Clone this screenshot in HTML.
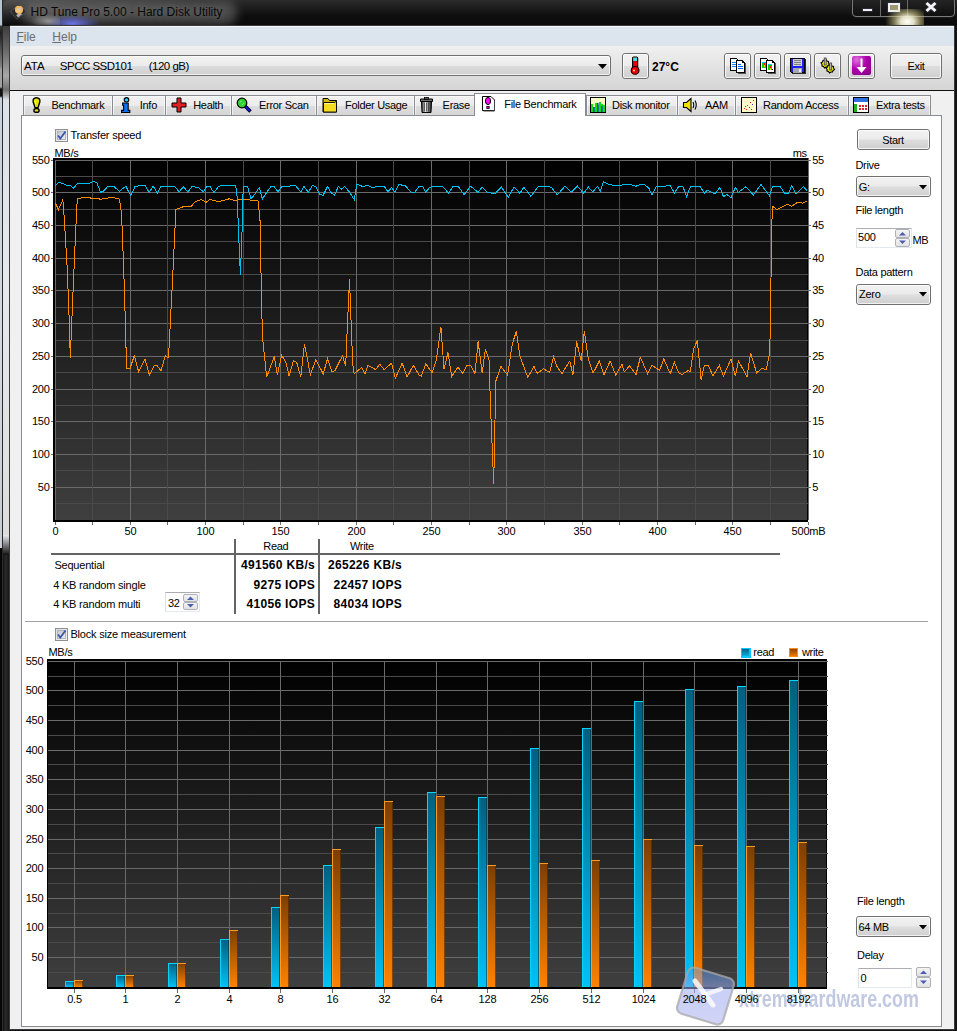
<!DOCTYPE html><html><head><meta charset="utf-8"><style>
html,body{margin:0;padding:0;width:957px;height:1031px;overflow:hidden;background:#121212}
.b{position:absolute;box-sizing:border-box}
.t{position:absolute;white-space:pre;font-family:"Liberation Sans",sans-serif}
svg.b{position:absolute}
</style></head><body>
<div class="b" style="left:0px;top:0px;width:957px;height:1031px;background:#121212"></div>
<div class="b" style="left:0px;top:0px;width:3px;height:548px;background:linear-gradient(#b8c4d0 0,#b8c4d0 25px,#3a3a3a 26px,#202020 33px,#808080 66px,#a0a0a0 70px,#a0a0a0 87px,#101010 89px,#101010 96px,#c8d0dc 98px,#d4d9e0 60%,#c8ccd4)"></div>
<div class="b" style="left:0px;top:548px;width:3px;height:483px;background:#060606"></div>
<div class="b" style="left:2px;top:0px;width:1px;height:1031px;background:#2a2a2a"></div>
<div class="b" style="left:3px;top:26px;width:6px;height:522px;background:linear-gradient(#3c3c3c 0,#6a6a6a 25px,#a8a8a8 50px,#707070 64px,#dde2e8 74px,#e6e8ec 50%,#dcdcdc 100%)"></div>
<div class="b" style="left:3px;top:548px;width:6px;height:483px;background:linear-gradient(90deg,#141414,#2a2a2a 50%,#141414)"></div>
<div class="b" style="left:3px;top:535px;width:6px;height:20px;background:linear-gradient(#e8eaee,#101010)"></div>
<div class="b" style="left:3px;top:0px;width:954px;height:26px;background:linear-gradient(180deg,#2c2c2c,#0e0e0e 60%,#0a0a0a);border-top-left-radius:6px"></div>
<div class="b" style="left:3px;top:0px;width:200px;height:26px;background:radial-gradient(ellipse at 0% 0%,rgba(110,110,110,.55),rgba(0,0,0,0) 70%)"></div>
<div class="b" style="left:22px;top:1px;width:215px;height:24px;background:rgba(120,120,120,.55);border-radius:12px;filter:blur(5px)"></div>
<div class="b" style="left:45px;top:15px;width:55px;height:14px;background:radial-gradient(ellipse at 50% 60%,rgba(110,120,240,.95),rgba(90,100,220,.4) 45%,rgba(0,0,0,0) 72%)"></div>
<div class="b" style="left:30px;top:14px;width:30px;height:12px;background:radial-gradient(ellipse at 60% 60%,rgba(200,200,200,.6),rgba(0,0,0,0) 70%)"></div>
<svg class="b" style="left:8px;top:2px" width="20" height="20" viewBox="0 0 20 20"><g transform="rotate(-40 10.3 9.7)"><rect x="4.3" y="4.7" width="12" height="10" rx="1" fill="#2a2a2a" stroke="#777" stroke-width=".7" stroke-dasharray="1.2 .8"/><rect x="6.5" y="11" width="5" height="3" fill="#b8b0b0"/></g><circle cx="11" cy="7.8" r="4.1" fill="#f0b860"/><circle cx="10.4" cy="8.4" r="2.2" fill="#f8d090" opacity=".7"/><circle cx="11.3" cy="7.4" r="1.3" fill="#c8c8d8"/></svg>
<div class="t" style="left:30.50px;top:3.83px;font-size:12px;line-height:16px;color:#080808;font-weight:normal;letter-spacing:0px;text-shadow:0 0 6px rgba(200,200,200,.35)">HD Tune Pro 5.00 - Hard Disk Utility</div>
<div class="b" style="left:851px;top:-4px;width:105px;height:22px;border:1px solid #1a1a1a;border-radius:5px;background:rgba(20,20,20,.35)"></div>
<div class="b" style="left:852px;top:-3px;width:103px;height:20px;border:1px solid #7a7a7a;border-radius:4px"></div>
<div class="b" style="left:880px;top:0px;width:1px;height:16px;background:#6a6a6a"></div>
<div class="b" style="left:907px;top:0px;width:1px;height:16px;background:#6a6a6a"></div>
<div class="b" style="left:862px;top:8px;width:11px;height:4px;background:#eef0f6;border:1px solid #2a2a3a"></div>
<div class="b" style="left:888px;top:3px;width:12px;height:9px;border:2px solid #eef0f6;outline:1px solid #2a2a3a;background:#a09870"></div>
<svg class="b" style="left:924px;top:1px" width="14" height="12" viewBox="0 0 14 12"><path d="M2.5 2 L11.5 10 M11.5 2 L2.5 10" stroke="#2a2a3a" stroke-width="4.6"/><path d="M2.5 2 L11.5 10 M11.5 2 L2.5 10" stroke="#f4f4f8" stroke-width="3"/></svg>
<div class="b" style="left:880px;top:9px;width:44px;height:18px;background:radial-gradient(ellipse 50% 90% at 62% 70%,rgba(255,255,252,1),rgba(250,248,220,.9) 30%,rgba(220,210,140,.55) 60%,rgba(0,0,0,0) 100%)"></div>
<div class="b" style="left:9px;top:25px;width:946px;height:1005px;background:#f0f0f0;border:1px solid #3a3a3a;box-sizing:border-box;border-radius:2px 2px 0 0"></div>
<div class="b" style="left:10px;top:26px;width:944px;height:1px;background:#f6f8fb"></div>
<div class="b" style="left:10px;top:27px;width:944px;height:19px;background:#dce4ee"></div>
<div class="t" style="left:16.40px;top:29.03px;font-size:12px;line-height:16px;color:#6d6d6d;font-weight:normal;letter-spacing:0px;"><u>F</u>ile</div>
<div class="t" style="left:52.30px;top:29.03px;font-size:12px;line-height:16px;color:#6d6d6d;font-weight:normal;letter-spacing:0px;"><u>H</u>elp</div>
<div class="b" style="left:10px;top:46px;width:944px;height:45px;background:linear-gradient(#f0f0f0,#d4d4d4)"></div>
<div class="b" style="left:10px;top:90px;width:944px;height:1px;background:#101010"></div>
<div class="b" style="left:10px;top:91px;width:944px;height:938px;background:#f0f0f0"></div>
<div class="b" style="left:21px;top:55px;width:590px;height:21px;border:1px solid #707070;border-radius:3px;background:linear-gradient(#f2f2f2,#ebebeb 50%,#dddddd 51%,#cfcfcf)"></div><div class="b" style="left:22px;top:56px;width:588px;height:19px;border:1px solid rgba(255,255,255,.7);border-radius:2px"></div>
<svg class="b" style="left:598px;top:64px" width="9" height="5" viewBox="0 0 9 5"><path d="M0 0 H9 L4.5 5 Z" fill="#000"/></svg>
<div class="t" style="left:23.90px;top:58.85px;font-size:11.5px;line-height:15.5px;color:#000;font-weight:normal;letter-spacing:0px;">ATA</div>
<div class="t" style="left:59.80px;top:58.85px;font-size:11.5px;line-height:15.5px;color:#000;font-weight:normal;letter-spacing:-0.5px;">SPCC SSD101</div>
<div class="t" style="left:148.70px;top:58.85px;font-size:11.5px;line-height:15.5px;color:#000;font-weight:normal;letter-spacing:-0.5px;">(120 gB)</div>
<div class="b" style="left:622px;top:53px;width:27px;height:26px;border:1px solid #707070;border-radius:3px;background:linear-gradient(#f2f2f2,#ebebeb 48%,#dddddd 52%,#cfcfcf)"></div><div class="b" style="left:623px;top:54px;width:25px;height:24px;border:1px solid rgba(255,255,255,.75);border-radius:2px"></div>
<svg class="b" style="left:628px;top:56px" width="16" height="20" viewBox="0 0 16 20"><rect x="4.6" y="1" width="5" height="12" rx="1" fill="#e80000" stroke="#000" stroke-width="1.1"/><rect x="5.2" y="1.6" width="3.8" height="3.4" fill="#40e0f0"/><circle cx="7.1" cy="14.4" r="3.9" fill="#e80000" stroke="#000" stroke-width="1.1"/><circle cx="6" cy="14.6" r="1" fill="#ffd0d0"/><path d="M9.6 2 V11" stroke="#000" stroke-width="1"/></svg>
<div class="t" style="left:652.00px;top:58.83px;font-size:12px;line-height:16px;color:#000;font-weight:bold;letter-spacing:0px;">27°C</div>
<div class="b" style="left:724px;top:53px;width:27px;height:26px;border:1px solid #707070;border-radius:3px;background:linear-gradient(#f2f2f2,#ebebeb 48%,#dddddd 52%,#cfcfcf)"></div><div class="b" style="left:725px;top:54px;width:25px;height:24px;border:1px solid rgba(255,255,255,.75);border-radius:2px"></div>
<div class="b" style="left:754px;top:53px;width:27px;height:26px;border:1px solid #707070;border-radius:3px;background:linear-gradient(#f2f2f2,#ebebeb 48%,#dddddd 52%,#cfcfcf)"></div><div class="b" style="left:755px;top:54px;width:25px;height:24px;border:1px solid rgba(255,255,255,.75);border-radius:2px"></div>
<div class="b" style="left:784px;top:53px;width:27px;height:26px;border:1px solid #707070;border-radius:3px;background:linear-gradient(#f2f2f2,#ebebeb 48%,#dddddd 52%,#cfcfcf)"></div><div class="b" style="left:785px;top:54px;width:25px;height:24px;border:1px solid rgba(255,255,255,.75);border-radius:2px"></div>
<div class="b" style="left:814px;top:53px;width:27px;height:26px;border:1px solid #707070;border-radius:3px;background:linear-gradient(#f2f2f2,#ebebeb 48%,#dddddd 52%,#cfcfcf)"></div><div class="b" style="left:815px;top:54px;width:25px;height:24px;border:1px solid rgba(255,255,255,.75);border-radius:2px"></div>
<div class="b" style="left:848px;top:53px;width:27px;height:26px;border:1px solid #707070;border-radius:3px;background:linear-gradient(#f2f2f2,#ebebeb 48%,#dddddd 52%,#cfcfcf)"></div><div class="b" style="left:849px;top:54px;width:25px;height:24px;border:1px solid rgba(255,255,255,.75);border-radius:2px"></div>
<svg class="b" style="left:730px;top:58px" width="17" height="17" viewBox="0 0 17 17" shape-rendering="crispEdges"><path d="M0.5 0.5 H6.5 L7.5 1.5 V12.5 H0.5 Z" fill="#fff" stroke="#000"/><path d="M6.5 2.5 H12.5 L14.5 4.5 V14.5 H6.5 Z" fill="#fff" stroke="#000"/><path d="M15.5 5 V15.5 H7.5" stroke="#555" fill="none"/><path d="M12.5 2.5 V4.5 H14.5" stroke="#000" fill="none"/><rect x="2" y="4" width="4" height="1" fill="#1090ff"/><rect x="2" y="6" width="4" height="1" fill="#1090ff"/><rect x="2" y="8" width="4" height="1" fill="#1090ff"/><rect x="8" y="6" width="3" height="1" fill="#0060ff"/><rect x="8" y="8" width="5" height="1" fill="#0060ff"/><rect x="8" y="10" width="5" height="1" fill="#0060ff"/></svg>
<svg class="b" style="left:760px;top:58px" width="17" height="17" viewBox="0 0 17 17" shape-rendering="crispEdges"><path d="M0.5 0.5 H6.5 L7.5 1.5 V12.5 H0.5 Z" fill="#fff" stroke="#000"/><path d="M6.5 2.5 H12.5 L14.5 4.5 V14.5 H6.5 Z" fill="#fff" stroke="#000"/><path d="M15.5 5 V15.5 H7.5" stroke="#555" fill="none"/><path d="M12.5 2.5 V4.5 H14.5" stroke="#000" fill="none"/><rect x="2" y="4" width="4" height="1" fill="#10c0ff"/><rect x="2" y="5" width="4" height="5" fill="#10d010"/><rect x="4" y="5" width="1" height="2" fill="#f00000"/><rect x="4" y="7" width="1" height="2" fill="#e8e000"/><rect x="8" y="6" width="4" height="1" fill="#10c0ff"/><rect x="8" y="7" width="4" height="5" fill="#10d010"/><rect x="10" y="8" width="1" height="2" fill="#f00000"/><rect x="10" y="10" width="1" height="2" fill="#e8e000"/><rect x="12" y="11" width="1" height="1" fill="#000"/></svg>
<svg class="b" style="left:790px;top:58px" width="16" height="16" viewBox="0 0 16 16" shape-rendering="crispEdges"><path d="M0.5 0.5 H14.5 V14.5 H1.5 L0.5 13.5 Z" fill="#2020f0" stroke="#000"/><rect x="3" y="1" width="9" height="7" fill="#d0d0d0"/><rect x="4" y="2" width="7" height="1" fill="#808080"/><rect x="4" y="4" width="7" height="1" fill="#808080"/><rect x="4" y="6" width="7" height="1" fill="#808080"/><rect x="3" y="10" width="9" height="5" fill="#a8a8a8"/><rect x="9" y="11" width="2" height="3" fill="#f0f0f0"/><path d="M15.5 1 V15.5 H2" stroke="#303030" fill="none"/></svg>
<svg class="b" style="left:818px;top:57px" width="18" height="18" viewBox="0 0 18 18"><g stroke="#000" stroke-width="1.1" fill="#f0ec00"><path d="M6.5 3 L8 2.5 L9 4 L10.5 4.5 L10.5 6 L11.5 7.5 L10 8.5 L9.5 10 L8 10 L6.5 11 L5.5 9.5 L4 9 L4 7.5 L3 6 L4.5 5 L5 3.5 Z"/><path d="M11.5 8 L13 7.5 L14 9 L15.5 9.5 L15.5 11 L16.5 12.5 L15 13.5 L14.5 15 L13 15 L11.5 16 L10.5 14.5 L9 14 L9 12.5 L8 11 L9.5 10 L10 8.5 Z"/></g><rect x="6.2" y="1" width="2" height="7" fill="#b8b8b8" stroke="#303030" stroke-width=".7"/><rect x="11.7" y="6" width="2" height="7" fill="#b8b8b8" stroke="#303030" stroke-width=".7"/></svg>
<div class="b" style="left:852px;top:56px;width:19px;height:19px;border-radius:2px;background:radial-gradient(circle at 25% 20%,#e070e0,#b000b0 45%,#8a008a 90%)"></div>
<svg class="b" style="left:852px;top:56px" width="19" height="19" viewBox="0 0 19 19"><path d="M8.5 2.5 H10.5 V11 H14.5 L9.5 17 L4.5 11 H8.5 Z" fill="#fff"/></svg>
<div class="b" style="left:890px;top:53px;width:52px;height:26px;border:1px solid #707070;border-radius:3px;background:linear-gradient(#f2f2f2,#ebebeb 48%,#dddddd 52%,#cfcfcf)"></div><div class="b" style="left:891px;top:54px;width:50px;height:24px;border:1px solid rgba(255,255,255,.75);border-radius:2px"></div>
<div class="t" style="left:816px;width:200px;top:59.36px;font-size:11px;line-height:15px;color:#000;font-weight:normal;letter-spacing:-0.3px;text-align:center;">Exit</div>
<div class="b" style="left:23px;top:95px;width:90px;height:21px;border:1px solid #898c95;border-bottom:none;background:linear-gradient(#f2f2f2,#ebebeb 50%,#dddddd 51%,#d5d5d5)"></div>
<div class="b" style="left:24px;top:96px;width:88px;height:19px;border:1px solid rgba(255,255,255,.6);border-bottom:none"></div>
<svg class="b" style="left:29px;top:97px" width="16" height="16" viewBox="0 0 16 16"><path d="M7.5 0.8 C4.6 0.8 3.8 2.6 4.2 5 L6 10.6 H9 L10.8 5 C11.2 2.6 10.4 0.8 7.5 0.8 Z" fill="#e8e400" stroke="#000" stroke-width="1.4"/><ellipse cx="7.5" cy="13.4" rx="2.6" ry="1.9" fill="#e8e400" stroke="#000" stroke-width="1.4"/><path d="M6 3 L6.8 7" stroke="#fffff0" stroke-width=".8" opacity=".8"/></svg>
<div class="t" style="left:51.50px;top:98.46px;font-size:11px;line-height:15px;color:#000;font-weight:normal;letter-spacing:-0.3px;">Benchmark</div>
<div class="b" style="left:112px;top:95px;width:54px;height:21px;border:1px solid #898c95;border-bottom:none;background:linear-gradient(#f2f2f2,#ebebeb 50%,#dddddd 51%,#d5d5d5)"></div>
<div class="b" style="left:113px;top:96px;width:52px;height:19px;border:1px solid rgba(255,255,255,.6);border-bottom:none"></div>
<svg class="b" style="left:118px;top:97px" width="16" height="16" viewBox="0 0 16 16"><ellipse cx="8.5" cy="2.8" rx="2.3" ry="2.2" fill="#30c8ff" stroke="#000" stroke-width="1.1"/><path d="M4.6 6 H10.2 V13.4 H11.8 V15.5 H3.6 V13.4 H5.6 V8.2 H4.6 Z" fill="#1070f8" stroke="#000" stroke-width="1.1"/></svg>
<div class="t" style="left:139.80px;top:98.46px;font-size:11px;line-height:15px;color:#000;font-weight:normal;letter-spacing:-0.3px;">Info</div>
<div class="b" style="left:165px;top:95px;width:67px;height:21px;border:1px solid #898c95;border-bottom:none;background:linear-gradient(#f2f2f2,#ebebeb 50%,#dddddd 51%,#d5d5d5)"></div>
<div class="b" style="left:166px;top:96px;width:65px;height:19px;border:1px solid rgba(255,255,255,.6);border-bottom:none"></div>
<svg class="b" style="left:171px;top:97px" width="16" height="16" viewBox="0 0 16 16"><path d="M6 1 H10 V6 H15 V10 H10 V15 H6 V10 H1 V6 H6 Z" fill="#e02020" stroke="#000" stroke-width="1"/></svg>
<div class="t" style="left:193.20px;top:98.46px;font-size:11px;line-height:15px;color:#000;font-weight:normal;letter-spacing:-0.3px;">Health</div>
<div class="b" style="left:231px;top:95px;width:86px;height:21px;border:1px solid #898c95;border-bottom:none;background:linear-gradient(#f2f2f2,#ebebeb 50%,#dddddd 51%,#d5d5d5)"></div>
<div class="b" style="left:232px;top:96px;width:84px;height:19px;border:1px solid rgba(255,255,255,.6);border-bottom:none"></div>
<svg class="b" style="left:236px;top:97px" width="16" height="16" viewBox="0 0 16 16"><path d="M9 9 L14.5 14.5" stroke="#000" stroke-width="3.6"/><path d="M9 9 L14 14" stroke="#1010d0" stroke-width="2.2"/><circle cx="6" cy="6" r="4.8" fill="#30d030" stroke="#000" stroke-width="1.2"/><path d="M4 5.5 L5.5 4 M6 8 L8 6" stroke="#c0ffc0" stroke-width=".8"/></svg>
<div class="t" style="left:259.00px;top:98.46px;font-size:11px;line-height:15px;color:#000;font-weight:normal;letter-spacing:-0.3px;">Error Scan</div>
<div class="b" style="left:316px;top:95px;width:99px;height:21px;border:1px solid #898c95;border-bottom:none;background:linear-gradient(#f2f2f2,#ebebeb 50%,#dddddd 51%,#d5d5d5)"></div>
<div class="b" style="left:317px;top:96px;width:97px;height:19px;border:1px solid rgba(255,255,255,.6);border-bottom:none"></div>
<svg class="b" style="left:322px;top:97px" width="16" height="16" viewBox="0 0 16 16"><path d="M1 1.5 H6 L7.5 3.5 H14.5 V15 H1 Z" fill="#d8b800" stroke="#000" stroke-width="1"/><path d="M1.5 5.5 H12.5 L14.5 4 V15 H1.5 Z" fill="#f4dc20" stroke="#000" stroke-width=".9"/><path d="M2.5 6.5 H12" stroke="#fff8a0" stroke-width="1"/></svg>
<div class="t" style="left:345.00px;top:98.46px;font-size:11px;line-height:15px;color:#000;font-weight:normal;letter-spacing:-0.3px;">Folder Usage</div>
<div class="b" style="left:414px;top:95px;width:62px;height:21px;border:1px solid #898c95;border-bottom:none;background:linear-gradient(#f2f2f2,#ebebeb 50%,#dddddd 51%,#d5d5d5)"></div>
<div class="b" style="left:415px;top:96px;width:60px;height:19px;border:1px solid rgba(255,255,255,.6);border-bottom:none"></div>
<svg class="b" style="left:419px;top:97px" width="16" height="16" viewBox="0 0 16 16"><path d="M1.5 2 H13.5 V4.5 H1.5 Z" fill="#707070" stroke="#000" stroke-width="1"/><rect x="5.5" y="0.5" width="4" height="2" fill="#555" stroke="#000" stroke-width=".8"/><path d="M2.5 4.5 H12.5 L12 15.5 H3 Z" fill="url(#gtr)" stroke="#000" stroke-width="1"/><path d="M5.5 5.5 V14.5 M7.5 5.5 V14.5 M9.5 5.5 V14.5" stroke="#222" stroke-width=".6"/><defs><linearGradient id="gtr"><stop offset="0" stop-color="#222"/><stop offset=".4" stop-color="#e8e8e8"/><stop offset=".6" stop-color="#a0a0a0"/><stop offset="1" stop-color="#1a1a1a"/></linearGradient></defs></svg>
<div class="t" style="left:442.60px;top:98.46px;font-size:11px;line-height:15px;color:#000;font-weight:normal;letter-spacing:-0.3px;">Erase</div>
<div class="b" style="left:586px;top:95px;width:92px;height:21px;border:1px solid #898c95;border-bottom:none;background:linear-gradient(#f2f2f2,#ebebeb 50%,#dddddd 51%,#d5d5d5)"></div>
<div class="b" style="left:587px;top:96px;width:90px;height:19px;border:1px solid rgba(255,255,255,.6);border-bottom:none"></div>
<svg class="b" style="left:590px;top:97px" width="16" height="16" viewBox="0 0 16 16"><rect x="0.5" y="0.5" width="15" height="15" fill="url(#gdm)" stroke="#000" stroke-width="1"/><defs><linearGradient id="gdm" x1="0" y1="0" x2="0" y2="1"><stop offset="0" stop-color="#ffffd0"/><stop offset="1" stop-color="#f0f0a0"/></linearGradient></defs><path d="M1 15 V7 H3 V10 H5 V6 H7 V8 H9 V5 H11 V7 H13 V8 H15 V15 Z" fill="#10e010"/><g fill="#2040e0"><rect x="3" y="10" width="1.6" height="5"/><rect x="7" y="6" width="1.6" height="9"/><rect x="11" y="9" width="1.6" height="6"/></g></svg>
<div class="t" style="left:612.00px;top:98.46px;font-size:11px;line-height:15px;color:#000;font-weight:normal;letter-spacing:-0.3px;">Disk monitor</div>
<div class="b" style="left:677px;top:95px;width:59px;height:21px;border:1px solid #898c95;border-bottom:none;background:linear-gradient(#f2f2f2,#ebebeb 50%,#dddddd 51%,#d5d5d5)"></div>
<div class="b" style="left:678px;top:96px;width:57px;height:19px;border:1px solid rgba(255,255,255,.6);border-bottom:none"></div>
<svg class="b" style="left:682px;top:97px" width="16" height="16" viewBox="0 0 16 16"><path d="M1.5 5.5 H4.5 L9 1.5 V14.5 L4.5 10.5 H1.5 Z" fill="#f0e000" stroke="#000" stroke-width="1.1"/><path d="M11 5 Q12.5 8 11 11 M13 3.5 Q15.5 8 13 12.5" stroke="#000" stroke-width="1.1" fill="none"/></svg>
<div class="t" style="left:705.00px;top:98.46px;font-size:11px;line-height:15px;color:#000;font-weight:normal;letter-spacing:-0.3px;">AAM</div>
<div class="b" style="left:735px;top:95px;width:114px;height:21px;border:1px solid #898c95;border-bottom:none;background:linear-gradient(#f2f2f2,#ebebeb 50%,#dddddd 51%,#d5d5d5)"></div>
<div class="b" style="left:736px;top:96px;width:112px;height:19px;border:1px solid rgba(255,255,255,.6);border-bottom:none"></div>
<svg class="b" style="left:741px;top:97px" width="16" height="16" viewBox="0 0 16 16"><rect x="0.5" y="0.5" width="15" height="15" fill="#fff8c8" stroke="#000" stroke-width="1"/><g fill="#e02020"><rect x="3" y="11" width="1" height="1"/><rect x="6" y="8" width="1" height="1"/><rect x="9" y="5" width="1" height="1"/><rect x="12" y="3" width="1" height="1"/><rect x="5" y="12" width="1" height="1"/></g><g fill="#2040e0"><rect x="4" y="9" width="1" height="1"/><rect x="8" y="10" width="1" height="1"/><rect x="11" y="7" width="1" height="1"/><rect x="10" y="12" width="1" height="1"/></g></svg>
<div class="t" style="left:763.00px;top:98.46px;font-size:11px;line-height:15px;color:#000;font-weight:normal;letter-spacing:-0.3px;">Random Access</div>
<div class="b" style="left:848px;top:95px;width:83px;height:21px;border:1px solid #898c95;border-bottom:none;background:linear-gradient(#f2f2f2,#ebebeb 50%,#dddddd 51%,#d5d5d5)"></div>
<div class="b" style="left:849px;top:96px;width:81px;height:19px;border:1px solid rgba(255,255,255,.6);border-bottom:none"></div>
<svg class="b" style="left:853px;top:97px" width="16" height="16" viewBox="0 0 16 16"><rect x="0.5" y="0.5" width="15" height="15" fill="#fff" stroke="#000" stroke-width="1"/><rect x="1" y="1" width="14" height="4" fill="#3070e0"/><rect x="1" y="7" width="3" height="8" fill="#20b020"/><g fill="#e02020"><rect x="6" y="8" width="2" height="2"/><rect x="9" y="8" width="2" height="2"/><rect x="12" y="8" width="2" height="2"/><rect x="6" y="11" width="2" height="2"/><rect x="9" y="11" width="2" height="2"/><rect x="12" y="11" width="2" height="2"/></g></svg>
<div class="t" style="left:876.00px;top:98.46px;font-size:11px;line-height:15px;color:#000;font-weight:normal;letter-spacing:-0.3px;">Extra tests</div>
<div class="b" style="left:21px;top:115px;width:921px;height:912px;border:1px solid #898c95;background:#fff"></div>
<div class="b" style="left:474px;top:93px;width:112px;height:23px;border:1px solid #898c95;border-bottom:none;background:#fff"></div>
<svg class="b" style="left:481px;top:95px" width="16" height="17" viewBox="0 0 16 17"><path d="M1.5 1.5 H10 L13.5 5 V15.5 H1.5 Z" fill="#fff" stroke="#000" stroke-width="1"/><path d="M13.5 5.5 V16 H2.5" stroke="#444" stroke-width="1" fill="none"/><ellipse cx="7" cy="6" rx="2.6" ry="3.6" fill="#ff00ff" stroke="#000" stroke-width="1"/><rect x="5.8" y="11.5" width="2.4" height="2" fill="#ff00ff" stroke="#000" stroke-width=".8"/></svg>
<div class="t" style="left:504.30px;top:96.86px;font-size:11px;line-height:15px;color:#000;font-weight:normal;letter-spacing:-0.3px;">File Benchmark</div>
<div class="b" style="left:55px;top:129px;width:13px;height:13px;border:1px solid #8e8f8f;background:linear-gradient(135deg,#dcdcdc,#f6f6f6)"></div><div class="b" style="left:57px;top:131px;width:9px;height:9px;border:1px solid #b0b4bc;background:linear-gradient(135deg,#c4c8d0,#eceef2)"></div><svg class="b" style="left:55px;top:129px" width="13" height="13" viewBox="0 0 13 13"><path d="M3 6.5 L5.3 9.5 L10.5 2.5" stroke="#3b55a8" stroke-width="1.8" fill="none"/></svg>
<div class="t" style="left:70.40px;top:128.26px;font-size:11px;line-height:15px;color:#000;font-weight:normal;letter-spacing:-0.2px;">Transfer speed</div>
<div class="t" style="left:54.50px;top:145.86px;font-size:11px;line-height:15px;color:#000;font-weight:normal;letter-spacing:-0.3px;">MB/s</div>
<div class="t" style="right:150.20000000000005px;top:145.56px;font-size:11px;line-height:15px;color:#000;font-weight:normal;letter-spacing:-0.3px;text-align:right;">ms</div>
<svg class="b" style="left:0px;top:0px" width="957" height="1031" viewBox="0 0 957 1031" shape-rendering="crispEdges">
<defs><linearGradient id="cg" x1="0" y1="0" x2="0" y2="1"><stop offset="0" stop-color="#000"/><stop offset="1" stop-color="#3f3f3f"/></linearGradient><linearGradient id="bb" x1="0" y1="0" x2="0" y2="1"><stop offset="0" stop-color="#005f80"/><stop offset="1" stop-color="#00c2f5"/></linearGradient><linearGradient id="bo" x1="0" y1="0" x2="0" y2="1"><stop offset="0" stop-color="#7c3e00"/><stop offset="1" stop-color="#ff8200"/></linearGradient></defs>
<rect x="53" y="158" width="755" height="364" fill="#000"/>
<rect x="55" y="160" width="752" height="360" fill="url(#cg)"/>
<path d="M55 503.5 H809" stroke="#4a4a4a" stroke-width="1"/>
<path d="M51 487.5 H811" stroke="#6a6a6a" stroke-width="1"/>
<path d="M55 470.5 H809" stroke="#4a4a4a" stroke-width="1"/>
<path d="M51 454.5 H811" stroke="#6a6a6a" stroke-width="1"/>
<path d="M55 438.5 H809" stroke="#4a4a4a" stroke-width="1"/>
<path d="M51 421.5 H811" stroke="#6a6a6a" stroke-width="1"/>
<path d="M55 405.5 H809" stroke="#4a4a4a" stroke-width="1"/>
<path d="M51 389.5 H811" stroke="#6a6a6a" stroke-width="1"/>
<path d="M55 372.5 H809" stroke="#4a4a4a" stroke-width="1"/>
<path d="M51 356.5 H811" stroke="#6a6a6a" stroke-width="1"/>
<path d="M55 340.5 H809" stroke="#4a4a4a" stroke-width="1"/>
<path d="M51 323.5 H811" stroke="#6a6a6a" stroke-width="1"/>
<path d="M55 307.5 H809" stroke="#4a4a4a" stroke-width="1"/>
<path d="M51 290.5 H811" stroke="#6a6a6a" stroke-width="1"/>
<path d="M55 274.5 H809" stroke="#4a4a4a" stroke-width="1"/>
<path d="M51 258.5 H811" stroke="#6a6a6a" stroke-width="1"/>
<path d="M55 241.5 H809" stroke="#4a4a4a" stroke-width="1"/>
<path d="M51 225.5 H811" stroke="#6a6a6a" stroke-width="1"/>
<path d="M55 209.5 H809" stroke="#4a4a4a" stroke-width="1"/>
<path d="M51 192.5 H811" stroke="#6a6a6a" stroke-width="1"/>
<path d="M55 176.5 H809" stroke="#4a4a4a" stroke-width="1"/>
<path d="M51 160.5 H811" stroke="#6a6a6a" stroke-width="1"/>
<path d="M55.5 160 V520" stroke="#6a6a6a" stroke-width="1"/>
<path d="M92.5 160 V520" stroke="#4a4a4a" stroke-width="1"/>
<path d="M130.5 160 V520" stroke="#6a6a6a" stroke-width="1"/>
<path d="M167.5 160 V520" stroke="#4a4a4a" stroke-width="1"/>
<path d="M205.5 160 V520" stroke="#6a6a6a" stroke-width="1"/>
<path d="M243.5 160 V520" stroke="#4a4a4a" stroke-width="1"/>
<path d="M280.5 160 V520" stroke="#6a6a6a" stroke-width="1"/>
<path d="M318.5 160 V520" stroke="#4a4a4a" stroke-width="1"/>
<path d="M356.5 160 V520" stroke="#6a6a6a" stroke-width="1"/>
<path d="M393.5 160 V520" stroke="#4a4a4a" stroke-width="1"/>
<path d="M431.5 160 V520" stroke="#6a6a6a" stroke-width="1"/>
<path d="M469.5 160 V520" stroke="#4a4a4a" stroke-width="1"/>
<path d="M506.5 160 V520" stroke="#6a6a6a" stroke-width="1"/>
<path d="M544.5 160 V520" stroke="#4a4a4a" stroke-width="1"/>
<path d="M582.5 160 V520" stroke="#6a6a6a" stroke-width="1"/>
<path d="M619.5 160 V520" stroke="#4a4a4a" stroke-width="1"/>
<path d="M657.5 160 V520" stroke="#6a6a6a" stroke-width="1"/>
<path d="M695.5 160 V520" stroke="#4a4a4a" stroke-width="1"/>
<path d="M732.5 160 V520" stroke="#6a6a6a" stroke-width="1"/>
<path d="M770.5 160 V520" stroke="#4a4a4a" stroke-width="1"/>
<path d="M808.5 158 V520" stroke="#6a6a6a" stroke-width="1"/>
<polyline points="55.3,203.1 58.5,209.5 62.8,199.9 63.9,212.7 67.1,266.0 69.2,319.4 70.3,357.8 72.4,306.6 75.6,231.9 77.3,198.8 84.2,197.3 101.2,199.2 111.9,197.3 119.4,199.2 121.5,212.7 123.6,266.0 125.8,336.5 126.4,368.5 130.0,368.5 134.3,355.7 138.6,371.7 145.0,358.9 149.3,374.9 154.6,365.3 156.7,365.3 161.0,370.6 165.3,355.7 168.5,357.8 172.7,276.7 175.9,209.5 183.4,206.7 190.9,206.7 195.1,201.6 201.5,199.5 205.8,202.4 210.1,199.5 218.6,201.6 229.3,198.8 233.6,200.3 246.4,199.5 258.1,201.0 260.3,223.4 260.9,268.2 262.4,336.5 266.7,377.0 274.2,356.8 277.4,374.9 281.6,355.3 285.9,362.1 289.1,376.0 293.4,361.0 296.6,362.1 300.8,377.0 304.5,344.0 310.4,374.9 315.8,359.5 323.2,373.8 327.5,358.9 331.8,371.7 335.0,370.6 342.5,355.7 345.7,366.4 346.7,340.8 349.5,278.9 350.6,308.7 352.7,364.2 354.2,373.8 361.7,367.4 364.9,373.8 368.1,365.3 375.5,369.6 379.8,364.2 384.1,369.6 391.5,363.2 395.4,378.1 402.2,363.2 407.1,377.0 413.3,365.3 419.3,375.3 421.4,376.0 425.7,363.8 432.1,372.8 436.4,360.0 440.9,326.8 444.0,368.8 448.0,352.6 451.7,376.5 458.0,367.2 462.6,373.4 467.3,365.0 470.4,365.0 475.0,373.4 478.1,341.4 482.2,373.4 485.3,349.5 489.0,359.4 490.6,409.1 493.7,483.7 495.8,381.2 500.8,366.3 507.6,375.0 512.3,343.9 516.3,331.5 520.0,356.3 527.8,377.5 534.0,366.3 537.1,373.4 543.4,368.8 549.6,372.5 553.6,357.0 557.3,367.2 562.0,373.4 569.8,361.0 572.9,375.0 576.6,341.4 581.2,361.0 584.3,330.9 588.4,359.4 593.0,373.4 599.3,361.0 603.9,375.0 610.1,361.0 615.7,375.0 621.9,364.1 624.3,371.7 629.6,365.9 636.0,374.5 640.3,357.4 647.7,373.8 652.0,365.3 655.2,367.4 659.5,370.6 663.8,358.9 670.2,373.8 674.4,362.1 678.7,372.8 681.9,374.5 688.3,370.6 690.4,371.7 693.6,349.3 697.3,340.3 701.1,379.6 704.3,365.9 708.6,365.9 712.9,376.0 719.3,365.3 723.5,376.0 731.0,358.9 735.3,376.0 738.5,361.0 747.0,376.6 750.6,353.1 756.6,372.8 761.9,368.5 766.2,369.6 769.4,353.6 770.5,328.0 771.5,229.8 772.6,206.3 776.9,209.5 787.6,204.2 791.8,206.3 797.2,202.4 802.5,203.1 807.3,201.0" fill="none" stroke="#ff8c00" stroke-width="1" shape-rendering="crispEdges"/>
<polyline points="55.3,186.0 58.5,182.8 62.8,183.2 67.1,185.4 70.3,185.4 73.5,188.1 77.7,183.2 89.5,183.2 93.8,181.1 97.0,183.2 100.6,192.4 103.4,191.3 107.6,186.6 114.0,186.6 119.4,191.3 125.8,186.2 130.7,195.6 135.0,186.6 140.7,185.4 145.0,185.6 149.3,192.4 153.1,186.2 157.4,193.0 161.0,186.6 174.9,186.6 179.1,192.0 183.4,186.6 187.7,192.0 192.0,186.6 198.3,187.5 203.3,191.8 206.9,186.2 210.1,186.6 213.9,192.8 218.6,186.2 222.9,185.4 235.7,185.4 237.2,197.7 238.9,240.4 240.4,274.6 242.1,229.8 243.2,186.6 247.5,186.6 251.1,198.8 255.0,193.9 259.2,187.5 262.4,198.8 266.7,192.4 271.0,186.6 274.2,186.6 278.0,192.0 281.6,186.6 295.5,185.6 300.8,192.0 304.0,186.6 308.3,192.4 312.6,185.4 315.8,186.6 320.0,194.5 323.2,195.2 327.5,186.6 330.7,192.4 334.6,195.2 338.2,186.6 341.4,189.2 344.6,186.6 348.9,191.3 354.2,199.5 357.0,183.9 362.7,186.6 368.1,185.4 372.8,188.1 376.6,186.2 384.1,186.2 387.9,192.0 391.5,187.5 394.8,192.0 399.0,184.5 405.4,185.8 410.8,192.0 415.0,192.0 419.3,186.2 422.5,186.2 425.7,192.0 430.0,187.1 442.4,186.1 448.6,193.3 453.3,186.1 458.0,186.1 464.2,194.8 470.4,186.1 478.1,192.4 482.2,187.1 487.5,192.4 495.2,193.6 501.4,187.1 508.3,197.3 513.9,187.1 520.0,193.3 523.8,187.1 530.9,196.4 538.7,186.1 551.1,187.1 557.3,194.8 565.1,186.1 571.3,192.4 577.5,186.1 583.7,193.3 588.4,187.1 593.0,191.7 597.7,186.1 600.2,191.7 603.3,181.8 610.1,184.9 620.0,185.4 624.3,184.5 631.7,184.9 636.0,186.2 640.3,184.5 644.5,184.5 648.8,188.1 652.0,195.2 656.3,186.6 662.7,186.6 670.2,185.4 674.4,193.1 678.7,186.6 683.0,186.6 686.6,196.7 690.4,186.6 700.0,186.6 704.3,193.1 707.5,190.3 711.8,192.4 715.0,193.9 719.9,187.5 723.5,196.7 726.7,194.5 731.0,197.7 735.3,187.5 738.5,192.4 745.9,186.6 753.4,195.2 760.9,184.5 769.4,195.6 772.6,186.6 780.1,186.2 784.4,193.1 788.6,193.1 791.8,185.4 796.1,193.9 803.6,186.6 807.3,191.3" fill="none" stroke="#00c0f0" stroke-width="1" shape-rendering="crispEdges"/>
<rect x="53" y="520" width="755" height="2" fill="#000"/>
<rect x="53" y="158" width="2" height="364" fill="#000"/>
<path d="M51 487.5 H53" stroke="#6a6a6a" stroke-width="1"/>
<path d="M51 454.5 H53" stroke="#6a6a6a" stroke-width="1"/>
<path d="M51 421.5 H53" stroke="#6a6a6a" stroke-width="1"/>
<path d="M51 389.5 H53" stroke="#6a6a6a" stroke-width="1"/>
<path d="M51 356.5 H53" stroke="#6a6a6a" stroke-width="1"/>
<path d="M51 323.5 H53" stroke="#6a6a6a" stroke-width="1"/>
<path d="M51 290.5 H53" stroke="#6a6a6a" stroke-width="1"/>
<path d="M51 258.5 H53" stroke="#6a6a6a" stroke-width="1"/>
<path d="M51 225.5 H53" stroke="#6a6a6a" stroke-width="1"/>
<path d="M51 192.5 H53" stroke="#6a6a6a" stroke-width="1"/>
<path d="M51 160.5 H53" stroke="#6a6a6a" stroke-width="1"/>
<path d="M55.5 522 V525" stroke="#6a6a6a" stroke-width="1"/>
<path d="M92.5 522 V525" stroke="#6a6a6a" stroke-width="1"/>
<path d="M130.5 522 V525" stroke="#6a6a6a" stroke-width="1"/>
<path d="M167.5 522 V525" stroke="#6a6a6a" stroke-width="1"/>
<path d="M205.5 522 V525" stroke="#6a6a6a" stroke-width="1"/>
<path d="M243.5 522 V525" stroke="#6a6a6a" stroke-width="1"/>
<path d="M280.5 522 V525" stroke="#6a6a6a" stroke-width="1"/>
<path d="M318.5 522 V525" stroke="#6a6a6a" stroke-width="1"/>
<path d="M356.5 522 V525" stroke="#6a6a6a" stroke-width="1"/>
<path d="M393.5 522 V525" stroke="#6a6a6a" stroke-width="1"/>
<path d="M431.5 522 V525" stroke="#6a6a6a" stroke-width="1"/>
<path d="M469.5 522 V525" stroke="#6a6a6a" stroke-width="1"/>
<path d="M506.5 522 V525" stroke="#6a6a6a" stroke-width="1"/>
<path d="M544.5 522 V525" stroke="#6a6a6a" stroke-width="1"/>
<path d="M582.5 522 V525" stroke="#6a6a6a" stroke-width="1"/>
<path d="M619.5 522 V525" stroke="#6a6a6a" stroke-width="1"/>
<path d="M657.5 522 V525" stroke="#6a6a6a" stroke-width="1"/>
<path d="M695.5 522 V525" stroke="#6a6a6a" stroke-width="1"/>
<path d="M732.5 522 V525" stroke="#6a6a6a" stroke-width="1"/>
<path d="M770.5 522 V525" stroke="#6a6a6a" stroke-width="1"/>
<path d="M808.5 522 V525" stroke="#6a6a6a" stroke-width="1"/>
<rect x="47" y="659" width="780" height="330" fill="#000"/>
<rect x="48" y="661" width="778" height="326" fill="url(#cg)"/>
<path d="M48 972.5 H828" stroke="#4a4a4a" stroke-width="1"/>
<path d="M48 957.5 H828" stroke="#6a6a6a" stroke-width="1"/>
<path d="M48 942.5 H828" stroke="#4a4a4a" stroke-width="1"/>
<path d="M48 927.5 H828" stroke="#6a6a6a" stroke-width="1"/>
<path d="M48 913.5 H828" stroke="#4a4a4a" stroke-width="1"/>
<path d="M48 898.5 H828" stroke="#6a6a6a" stroke-width="1"/>
<path d="M48 883.5 H828" stroke="#4a4a4a" stroke-width="1"/>
<path d="M48 868.5 H828" stroke="#6a6a6a" stroke-width="1"/>
<path d="M48 853.5 H828" stroke="#4a4a4a" stroke-width="1"/>
<path d="M48 839.5 H828" stroke="#6a6a6a" stroke-width="1"/>
<path d="M48 824.5 H828" stroke="#4a4a4a" stroke-width="1"/>
<path d="M48 809.5 H828" stroke="#6a6a6a" stroke-width="1"/>
<path d="M48 794.5 H828" stroke="#4a4a4a" stroke-width="1"/>
<path d="M48 779.5 H828" stroke="#6a6a6a" stroke-width="1"/>
<path d="M48 764.5 H828" stroke="#4a4a4a" stroke-width="1"/>
<path d="M48 750.5 H828" stroke="#6a6a6a" stroke-width="1"/>
<path d="M48 735.5 H828" stroke="#4a4a4a" stroke-width="1"/>
<path d="M48 720.5 H828" stroke="#6a6a6a" stroke-width="1"/>
<path d="M48 705.5 H828" stroke="#4a4a4a" stroke-width="1"/>
<path d="M48 690.5 H828" stroke="#6a6a6a" stroke-width="1"/>
<path d="M48 676.5 H828" stroke="#4a4a4a" stroke-width="1"/>
<path d="M48 661.5 H828" stroke="#6a6a6a" stroke-width="1"/>
<path d="M74.5 661 V993" stroke="#6a6a6a" stroke-width="1"/>
<path d="M125.5 661 V993" stroke="#6a6a6a" stroke-width="1"/>
<path d="M177.5 661 V993" stroke="#6a6a6a" stroke-width="1"/>
<path d="M229.5 661 V993" stroke="#6a6a6a" stroke-width="1"/>
<path d="M280.5 661 V993" stroke="#6a6a6a" stroke-width="1"/>
<path d="M332.5 661 V993" stroke="#6a6a6a" stroke-width="1"/>
<path d="M384.5 661 V993" stroke="#6a6a6a" stroke-width="1"/>
<path d="M436.5 661 V993" stroke="#6a6a6a" stroke-width="1"/>
<path d="M487.5 661 V993" stroke="#6a6a6a" stroke-width="1"/>
<path d="M539.5 661 V993" stroke="#6a6a6a" stroke-width="1"/>
<path d="M591.5 661 V993" stroke="#6a6a6a" stroke-width="1"/>
<path d="M643.5 661 V993" stroke="#6a6a6a" stroke-width="1"/>
<path d="M694.5 661 V993" stroke="#6a6a6a" stroke-width="1"/>
<path d="M746.5 661 V993" stroke="#6a6a6a" stroke-width="1"/>
<path d="M798.5 661 V993" stroke="#6a6a6a" stroke-width="1"/>
<rect x="65" y="981" width="9" height="6" fill="url(#bb)"/>
<rect x="65" y="981" width="1" height="6" fill="#00d4ff"/><rect x="65" y="981" width="9" height="1" fill="#00d4ff"/>
<rect x="73" y="982" width="1" height="5" fill="#003040" opacity=".6"/>
<rect x="74" y="980" width="9" height="7" fill="url(#bo)"/>
<rect x="74" y="980" width="1" height="7" fill="#ff9a20"/><rect x="74" y="980" width="9" height="1" fill="#ff9a20"/>
<rect x="82" y="981" width="1" height="6" fill="#402000" opacity=".6"/>
<rect x="116" y="975" width="9" height="12" fill="url(#bb)"/>
<rect x="116" y="975" width="1" height="12" fill="#00d4ff"/><rect x="116" y="975" width="9" height="1" fill="#00d4ff"/>
<rect x="124" y="976" width="1" height="11" fill="#003040" opacity=".6"/>
<rect x="125" y="975" width="9" height="12" fill="url(#bo)"/>
<rect x="125" y="975" width="1" height="12" fill="#ff9a20"/><rect x="125" y="975" width="9" height="1" fill="#ff9a20"/>
<rect x="133" y="976" width="1" height="11" fill="#402000" opacity=".6"/>
<rect x="168" y="963" width="9" height="24" fill="url(#bb)"/>
<rect x="168" y="963" width="1" height="24" fill="#00d4ff"/><rect x="168" y="963" width="9" height="1" fill="#00d4ff"/>
<rect x="176" y="964" width="1" height="23" fill="#003040" opacity=".6"/>
<rect x="177" y="963" width="9" height="24" fill="url(#bo)"/>
<rect x="177" y="963" width="1" height="24" fill="#ff9a20"/><rect x="177" y="963" width="9" height="1" fill="#ff9a20"/>
<rect x="185" y="964" width="1" height="23" fill="#402000" opacity=".6"/>
<rect x="220" y="939" width="9" height="48" fill="url(#bb)"/>
<rect x="220" y="939" width="1" height="48" fill="#00d4ff"/><rect x="220" y="939" width="9" height="1" fill="#00d4ff"/>
<rect x="228" y="940" width="1" height="47" fill="#003040" opacity=".6"/>
<rect x="229" y="930" width="9" height="57" fill="url(#bo)"/>
<rect x="229" y="930" width="1" height="57" fill="#ff9a20"/><rect x="229" y="930" width="9" height="1" fill="#ff9a20"/>
<rect x="237" y="931" width="1" height="56" fill="#402000" opacity=".6"/>
<rect x="271" y="907" width="9" height="80" fill="url(#bb)"/>
<rect x="271" y="907" width="1" height="80" fill="#00d4ff"/><rect x="271" y="907" width="9" height="1" fill="#00d4ff"/>
<rect x="279" y="908" width="1" height="79" fill="#003040" opacity=".6"/>
<rect x="280" y="895" width="9" height="92" fill="url(#bo)"/>
<rect x="280" y="895" width="1" height="92" fill="#ff9a20"/><rect x="280" y="895" width="9" height="1" fill="#ff9a20"/>
<rect x="288" y="896" width="1" height="91" fill="#402000" opacity=".6"/>
<rect x="323" y="865" width="9" height="122" fill="url(#bb)"/>
<rect x="323" y="865" width="1" height="122" fill="#00d4ff"/><rect x="323" y="865" width="9" height="1" fill="#00d4ff"/>
<rect x="331" y="866" width="1" height="121" fill="#003040" opacity=".6"/>
<rect x="332" y="849" width="9" height="138" fill="url(#bo)"/>
<rect x="332" y="849" width="1" height="138" fill="#ff9a20"/><rect x="332" y="849" width="9" height="1" fill="#ff9a20"/>
<rect x="340" y="850" width="1" height="137" fill="#402000" opacity=".6"/>
<rect x="375" y="827" width="9" height="160" fill="url(#bb)"/>
<rect x="375" y="827" width="1" height="160" fill="#00d4ff"/><rect x="375" y="827" width="9" height="1" fill="#00d4ff"/>
<rect x="383" y="828" width="1" height="159" fill="#003040" opacity=".6"/>
<rect x="384" y="801" width="9" height="186" fill="url(#bo)"/>
<rect x="384" y="801" width="1" height="186" fill="#ff9a20"/><rect x="384" y="801" width="9" height="1" fill="#ff9a20"/>
<rect x="392" y="802" width="1" height="185" fill="#402000" opacity=".6"/>
<rect x="427" y="792" width="9" height="195" fill="url(#bb)"/>
<rect x="427" y="792" width="1" height="195" fill="#00d4ff"/><rect x="427" y="792" width="9" height="1" fill="#00d4ff"/>
<rect x="435" y="793" width="1" height="194" fill="#003040" opacity=".6"/>
<rect x="436" y="796" width="9" height="191" fill="url(#bo)"/>
<rect x="436" y="796" width="1" height="191" fill="#ff9a20"/><rect x="436" y="796" width="9" height="1" fill="#ff9a20"/>
<rect x="444" y="797" width="1" height="190" fill="#402000" opacity=".6"/>
<rect x="478" y="797" width="9" height="190" fill="url(#bb)"/>
<rect x="478" y="797" width="1" height="190" fill="#00d4ff"/><rect x="478" y="797" width="9" height="1" fill="#00d4ff"/>
<rect x="486" y="798" width="1" height="189" fill="#003040" opacity=".6"/>
<rect x="487" y="865" width="9" height="122" fill="url(#bo)"/>
<rect x="487" y="865" width="1" height="122" fill="#ff9a20"/><rect x="487" y="865" width="9" height="1" fill="#ff9a20"/>
<rect x="495" y="866" width="1" height="121" fill="#402000" opacity=".6"/>
<rect x="530" y="748" width="9" height="239" fill="url(#bb)"/>
<rect x="530" y="748" width="1" height="239" fill="#00d4ff"/><rect x="530" y="748" width="9" height="1" fill="#00d4ff"/>
<rect x="538" y="749" width="1" height="238" fill="#003040" opacity=".6"/>
<rect x="539" y="863" width="9" height="124" fill="url(#bo)"/>
<rect x="539" y="863" width="1" height="124" fill="#ff9a20"/><rect x="539" y="863" width="9" height="1" fill="#ff9a20"/>
<rect x="547" y="864" width="1" height="123" fill="#402000" opacity=".6"/>
<rect x="582" y="728" width="9" height="259" fill="url(#bb)"/>
<rect x="582" y="728" width="1" height="259" fill="#00d4ff"/><rect x="582" y="728" width="9" height="1" fill="#00d4ff"/>
<rect x="590" y="729" width="1" height="258" fill="#003040" opacity=".6"/>
<rect x="591" y="860" width="9" height="127" fill="url(#bo)"/>
<rect x="591" y="860" width="1" height="127" fill="#ff9a20"/><rect x="591" y="860" width="9" height="1" fill="#ff9a20"/>
<rect x="599" y="861" width="1" height="126" fill="#402000" opacity=".6"/>
<rect x="634" y="701" width="9" height="286" fill="url(#bb)"/>
<rect x="634" y="701" width="1" height="286" fill="#00d4ff"/><rect x="634" y="701" width="9" height="1" fill="#00d4ff"/>
<rect x="642" y="702" width="1" height="285" fill="#003040" opacity=".6"/>
<rect x="643" y="839" width="9" height="148" fill="url(#bo)"/>
<rect x="643" y="839" width="1" height="148" fill="#ff9a20"/><rect x="643" y="839" width="9" height="1" fill="#ff9a20"/>
<rect x="651" y="840" width="1" height="147" fill="#402000" opacity=".6"/>
<rect x="685" y="689" width="9" height="298" fill="url(#bb)"/>
<rect x="685" y="689" width="1" height="298" fill="#00d4ff"/><rect x="685" y="689" width="9" height="1" fill="#00d4ff"/>
<rect x="693" y="690" width="1" height="297" fill="#003040" opacity=".6"/>
<rect x="694" y="845" width="9" height="142" fill="url(#bo)"/>
<rect x="694" y="845" width="1" height="142" fill="#ff9a20"/><rect x="694" y="845" width="9" height="1" fill="#ff9a20"/>
<rect x="702" y="846" width="1" height="141" fill="#402000" opacity=".6"/>
<rect x="737" y="686" width="9" height="301" fill="url(#bb)"/>
<rect x="737" y="686" width="1" height="301" fill="#00d4ff"/><rect x="737" y="686" width="9" height="1" fill="#00d4ff"/>
<rect x="745" y="687" width="1" height="300" fill="#003040" opacity=".6"/>
<rect x="746" y="846" width="9" height="141" fill="url(#bo)"/>
<rect x="746" y="846" width="1" height="141" fill="#ff9a20"/><rect x="746" y="846" width="9" height="1" fill="#ff9a20"/>
<rect x="754" y="847" width="1" height="140" fill="#402000" opacity=".6"/>
<rect x="789" y="680" width="9" height="307" fill="url(#bb)"/>
<rect x="789" y="680" width="1" height="307" fill="#00d4ff"/><rect x="789" y="680" width="9" height="1" fill="#00d4ff"/>
<rect x="797" y="681" width="1" height="306" fill="#003040" opacity=".6"/>
<rect x="798" y="842" width="9" height="145" fill="url(#bo)"/>
<rect x="798" y="842" width="1" height="145" fill="#ff9a20"/><rect x="798" y="842" width="9" height="1" fill="#ff9a20"/>
<rect x="806" y="843" width="1" height="144" fill="#402000" opacity=".6"/>
<rect x="47" y="987" width="780" height="2" fill="#000"/>
<rect x="47" y="659" width="780" height="2" fill="#000"/>
<path d="M74.5 989 V993" stroke="#6a6a6a" stroke-width="1"/>
<path d="M125.5 989 V993" stroke="#6a6a6a" stroke-width="1"/>
<path d="M177.5 989 V993" stroke="#6a6a6a" stroke-width="1"/>
<path d="M229.5 989 V993" stroke="#6a6a6a" stroke-width="1"/>
<path d="M280.5 989 V993" stroke="#6a6a6a" stroke-width="1"/>
<path d="M332.5 989 V993" stroke="#6a6a6a" stroke-width="1"/>
<path d="M384.5 989 V993" stroke="#6a6a6a" stroke-width="1"/>
<path d="M436.5 989 V993" stroke="#6a6a6a" stroke-width="1"/>
<path d="M487.5 989 V993" stroke="#6a6a6a" stroke-width="1"/>
<path d="M539.5 989 V993" stroke="#6a6a6a" stroke-width="1"/>
<path d="M591.5 989 V993" stroke="#6a6a6a" stroke-width="1"/>
<path d="M643.5 989 V993" stroke="#6a6a6a" stroke-width="1"/>
<path d="M694.5 989 V993" stroke="#6a6a6a" stroke-width="1"/>
<path d="M746.5 989 V993" stroke="#6a6a6a" stroke-width="1"/>
<path d="M798.5 989 V993" stroke="#6a6a6a" stroke-width="1"/>
<rect x="741" y="648" width="9" height="9" fill="url(#bb)"/><rect x="741" y="648" width="9" height="9" fill="none" stroke="#00c8ff" stroke-width="1" transform="translate(.5 .5) scale(1)" />
<rect x="789" y="648" width="9" height="9" fill="url(#bo)"/>
</svg>
<svg class="b" style="left:660px;top:955px" width="100" height="76" viewBox="660 955 100 76"><defs><linearGradient id="wm" x1="0" y1="0" x2="0.3" y2="1"><stop offset="0" stop-color="#4a9af8" stop-opacity=".45"/><stop offset=".45" stop-color="#a0acf0" stop-opacity=".55"/><stop offset="1" stop-color="#c4c8f4" stop-opacity=".8"/></linearGradient></defs><g transform="rotate(17 705.5 996)"><rect x="681.5" y="972" width="48" height="48" rx="6" fill="url(#wm)" stroke="#a8a8a8" stroke-opacity=".75" stroke-width="2.2"/></g><path d="M695 981 L713 1005" stroke="#fff" stroke-opacity=".8" stroke-width="5" stroke-linecap="round"/><path d="M704 995 L721 989" stroke="#fff" stroke-opacity=".75" stroke-width="4.5" stroke-linecap="round"/></svg>
<div class="t" style="left:739px;top:984px;font-size:24px;line-height:30px;color:rgba(150,165,205,.6);font-weight:bold;transform:scaleX(.745);transform-origin:0 0;letter-spacing:0px">xtremehardware.com</div>
<div class="b" style="left:741px;top:648px;width:9px;height:9px;border:1px solid #00c8ff;background:linear-gradient(#00608a,#00b0e0)"></div>
<div class="b" style="left:789px;top:648px;width:9px;height:9px;border:1px solid #ff8c10;background:linear-gradient(#8a4400,#f07800)"></div>
<div class="t" style="left:753.30px;top:644.56px;font-size:11px;line-height:15px;color:#000;font-weight:normal;letter-spacing:-0.3px;">read</div>
<div class="t" style="left:801.90px;top:644.56px;font-size:11px;line-height:15px;color:#000;font-weight:normal;letter-spacing:-0.3px;">write</div>
<div class="t" style="right:907.3px;top:480.06px;font-size:11px;line-height:15px;color:#000;font-weight:normal;letter-spacing:-0.2px;text-align:right;">50</div>
<div class="t" style="left:812.20px;top:480.06px;font-size:11px;line-height:15px;color:#000;font-weight:normal;letter-spacing:-0.2px;">5</div>
<div class="t" style="right:907.3px;top:447.06px;font-size:11px;line-height:15px;color:#000;font-weight:normal;letter-spacing:-0.2px;text-align:right;">100</div>
<div class="t" style="left:812.20px;top:447.06px;font-size:11px;line-height:15px;color:#000;font-weight:normal;letter-spacing:-0.2px;">10</div>
<div class="t" style="right:907.3px;top:414.06px;font-size:11px;line-height:15px;color:#000;font-weight:normal;letter-spacing:-0.2px;text-align:right;">150</div>
<div class="t" style="left:812.20px;top:414.06px;font-size:11px;line-height:15px;color:#000;font-weight:normal;letter-spacing:-0.2px;">15</div>
<div class="t" style="right:907.3px;top:382.06px;font-size:11px;line-height:15px;color:#000;font-weight:normal;letter-spacing:-0.2px;text-align:right;">200</div>
<div class="t" style="left:812.20px;top:382.06px;font-size:11px;line-height:15px;color:#000;font-weight:normal;letter-spacing:-0.2px;">20</div>
<div class="t" style="right:907.3px;top:349.06px;font-size:11px;line-height:15px;color:#000;font-weight:normal;letter-spacing:-0.2px;text-align:right;">250</div>
<div class="t" style="left:812.20px;top:349.06px;font-size:11px;line-height:15px;color:#000;font-weight:normal;letter-spacing:-0.2px;">25</div>
<div class="t" style="right:907.3px;top:316.06px;font-size:11px;line-height:15px;color:#000;font-weight:normal;letter-spacing:-0.2px;text-align:right;">300</div>
<div class="t" style="left:812.20px;top:316.06px;font-size:11px;line-height:15px;color:#000;font-weight:normal;letter-spacing:-0.2px;">30</div>
<div class="t" style="right:907.3px;top:283.06px;font-size:11px;line-height:15px;color:#000;font-weight:normal;letter-spacing:-0.2px;text-align:right;">350</div>
<div class="t" style="left:812.20px;top:283.06px;font-size:11px;line-height:15px;color:#000;font-weight:normal;letter-spacing:-0.2px;">35</div>
<div class="t" style="right:907.3px;top:251.06px;font-size:11px;line-height:15px;color:#000;font-weight:normal;letter-spacing:-0.2px;text-align:right;">400</div>
<div class="t" style="left:812.20px;top:251.06px;font-size:11px;line-height:15px;color:#000;font-weight:normal;letter-spacing:-0.2px;">40</div>
<div class="t" style="right:907.3px;top:218.06px;font-size:11px;line-height:15px;color:#000;font-weight:normal;letter-spacing:-0.2px;text-align:right;">450</div>
<div class="t" style="left:812.20px;top:218.06px;font-size:11px;line-height:15px;color:#000;font-weight:normal;letter-spacing:-0.2px;">45</div>
<div class="t" style="right:907.3px;top:185.06px;font-size:11px;line-height:15px;color:#000;font-weight:normal;letter-spacing:-0.2px;text-align:right;">500</div>
<div class="t" style="left:812.20px;top:185.06px;font-size:11px;line-height:15px;color:#000;font-weight:normal;letter-spacing:-0.2px;">50</div>
<div class="t" style="right:907.3px;top:153.06px;font-size:11px;line-height:15px;color:#000;font-weight:normal;letter-spacing:-0.2px;text-align:right;">550</div>
<div class="t" style="left:812.20px;top:153.06px;font-size:11px;line-height:15px;color:#000;font-weight:normal;letter-spacing:-0.2px;">55</div>
<div class="t" style="left:-44.5px;width:200px;top:523.86px;font-size:11px;line-height:15px;color:#000;font-weight:normal;letter-spacing:-0.2px;text-align:center;">0</div>
<div class="t" style="left:30.5px;width:200px;top:523.86px;font-size:11px;line-height:15px;color:#000;font-weight:normal;letter-spacing:-0.2px;text-align:center;">50</div>
<div class="t" style="left:105.5px;width:200px;top:523.86px;font-size:11px;line-height:15px;color:#000;font-weight:normal;letter-spacing:-0.2px;text-align:center;">100</div>
<div class="t" style="left:180.5px;width:200px;top:523.86px;font-size:11px;line-height:15px;color:#000;font-weight:normal;letter-spacing:-0.2px;text-align:center;">150</div>
<div class="t" style="left:256.5px;width:200px;top:523.86px;font-size:11px;line-height:15px;color:#000;font-weight:normal;letter-spacing:-0.2px;text-align:center;">200</div>
<div class="t" style="left:331.5px;width:200px;top:523.86px;font-size:11px;line-height:15px;color:#000;font-weight:normal;letter-spacing:-0.2px;text-align:center;">250</div>
<div class="t" style="left:406.5px;width:200px;top:523.86px;font-size:11px;line-height:15px;color:#000;font-weight:normal;letter-spacing:-0.2px;text-align:center;">300</div>
<div class="t" style="left:482.5px;width:200px;top:523.86px;font-size:11px;line-height:15px;color:#000;font-weight:normal;letter-spacing:-0.2px;text-align:center;">350</div>
<div class="t" style="left:557.5px;width:200px;top:523.86px;font-size:11px;line-height:15px;color:#000;font-weight:normal;letter-spacing:-0.2px;text-align:center;">400</div>
<div class="t" style="left:632.5px;width:200px;top:523.86px;font-size:11px;line-height:15px;color:#000;font-weight:normal;letter-spacing:-0.2px;text-align:center;">450</div>
<div class="t" style="left:708.5px;width:200px;top:523.86px;font-size:11px;line-height:15px;color:#000;font-weight:normal;letter-spacing:-0.2px;text-align:center;">500mB</div>
<div class="t" style="right:913.6px;top:950.06px;font-size:11px;line-height:15px;color:#000;font-weight:normal;letter-spacing:-0.2px;text-align:right;">50</div>
<div class="t" style="right:913.6px;top:920.06px;font-size:11px;line-height:15px;color:#000;font-weight:normal;letter-spacing:-0.2px;text-align:right;">100</div>
<div class="t" style="right:913.6px;top:891.06px;font-size:11px;line-height:15px;color:#000;font-weight:normal;letter-spacing:-0.2px;text-align:right;">150</div>
<div class="t" style="right:913.6px;top:861.06px;font-size:11px;line-height:15px;color:#000;font-weight:normal;letter-spacing:-0.2px;text-align:right;">200</div>
<div class="t" style="right:913.6px;top:832.06px;font-size:11px;line-height:15px;color:#000;font-weight:normal;letter-spacing:-0.2px;text-align:right;">250</div>
<div class="t" style="right:913.6px;top:802.06px;font-size:11px;line-height:15px;color:#000;font-weight:normal;letter-spacing:-0.2px;text-align:right;">300</div>
<div class="t" style="right:913.6px;top:772.06px;font-size:11px;line-height:15px;color:#000;font-weight:normal;letter-spacing:-0.2px;text-align:right;">350</div>
<div class="t" style="right:913.6px;top:743.06px;font-size:11px;line-height:15px;color:#000;font-weight:normal;letter-spacing:-0.2px;text-align:right;">400</div>
<div class="t" style="right:913.6px;top:713.06px;font-size:11px;line-height:15px;color:#000;font-weight:normal;letter-spacing:-0.2px;text-align:right;">450</div>
<div class="t" style="right:913.6px;top:683.06px;font-size:11px;line-height:15px;color:#000;font-weight:normal;letter-spacing:-0.2px;text-align:right;">500</div>
<div class="t" style="right:913.6px;top:654.06px;font-size:11px;line-height:15px;color:#000;font-weight:normal;letter-spacing:-0.2px;text-align:right;">550</div>
<div class="t" style="left:-25.5px;width:200px;top:991.86px;font-size:11px;line-height:15px;color:#000;font-weight:normal;letter-spacing:-0.2px;text-align:center;">0.5</div>
<div class="t" style="left:25.5px;width:200px;top:991.86px;font-size:11px;line-height:15px;color:#000;font-weight:normal;letter-spacing:-0.2px;text-align:center;">1</div>
<div class="t" style="left:77.5px;width:200px;top:991.86px;font-size:11px;line-height:15px;color:#000;font-weight:normal;letter-spacing:-0.2px;text-align:center;">2</div>
<div class="t" style="left:129.5px;width:200px;top:991.86px;font-size:11px;line-height:15px;color:#000;font-weight:normal;letter-spacing:-0.2px;text-align:center;">4</div>
<div class="t" style="left:180.5px;width:200px;top:991.86px;font-size:11px;line-height:15px;color:#000;font-weight:normal;letter-spacing:-0.2px;text-align:center;">8</div>
<div class="t" style="left:232.5px;width:200px;top:991.86px;font-size:11px;line-height:15px;color:#000;font-weight:normal;letter-spacing:-0.2px;text-align:center;">16</div>
<div class="t" style="left:284.5px;width:200px;top:991.86px;font-size:11px;line-height:15px;color:#000;font-weight:normal;letter-spacing:-0.2px;text-align:center;">32</div>
<div class="t" style="left:336.5px;width:200px;top:991.86px;font-size:11px;line-height:15px;color:#000;font-weight:normal;letter-spacing:-0.2px;text-align:center;">64</div>
<div class="t" style="left:387.5px;width:200px;top:991.86px;font-size:11px;line-height:15px;color:#000;font-weight:normal;letter-spacing:-0.2px;text-align:center;">128</div>
<div class="t" style="left:439.5px;width:200px;top:991.86px;font-size:11px;line-height:15px;color:#000;font-weight:normal;letter-spacing:-0.2px;text-align:center;">256</div>
<div class="t" style="left:491.5px;width:200px;top:991.86px;font-size:11px;line-height:15px;color:#000;font-weight:normal;letter-spacing:-0.2px;text-align:center;">512</div>
<div class="t" style="left:543.5px;width:200px;top:991.86px;font-size:11px;line-height:15px;color:#000;font-weight:normal;letter-spacing:-0.2px;text-align:center;">1024</div>
<div class="t" style="left:594.5px;width:200px;top:991.86px;font-size:11px;line-height:15px;color:#000;font-weight:normal;letter-spacing:-0.2px;text-align:center;">2048</div>
<div class="t" style="left:646.5px;width:200px;top:991.86px;font-size:11px;line-height:15px;color:#000;font-weight:normal;letter-spacing:-0.2px;text-align:center;">4096</div>
<div class="t" style="left:698.5px;width:200px;top:991.86px;font-size:11px;line-height:15px;color:#000;font-weight:normal;letter-spacing:-0.2px;text-align:center;">8192</div>
<div class="b" style="left:55px;top:628px;width:13px;height:13px;border:1px solid #8e8f8f;background:linear-gradient(135deg,#dcdcdc,#f6f6f6)"></div><div class="b" style="left:57px;top:630px;width:9px;height:9px;border:1px solid #b0b4bc;background:linear-gradient(135deg,#c4c8d0,#eceef2)"></div><svg class="b" style="left:55px;top:628px" width="13" height="13" viewBox="0 0 13 13"><path d="M3 6.5 L5.3 9.5 L10.5 2.5" stroke="#3b55a8" stroke-width="1.8" fill="none"/></svg>
<div class="t" style="left:70.40px;top:627.36px;font-size:11px;line-height:15px;color:#000;font-weight:normal;letter-spacing:-0.2px;">Block size measurement</div>
<div class="t" style="left:48.50px;top:644.66px;font-size:11px;line-height:15px;color:#000;font-weight:normal;letter-spacing:-0.3px;">MB/s</div>
<div class="b" style="left:234px;top:539px;width:2px;height:75px;background:#646464"></div>
<div class="b" style="left:318px;top:539px;width:2px;height:75px;background:#646464"></div>
<div class="b" style="left:51px;top:553px;width:729px;height:2px;background:#646464"></div>
<div class="t" style="left:175.8px;width:200px;top:538.86px;font-size:11px;line-height:15px;color:#000;font-weight:normal;letter-spacing:-0.3px;text-align:center;">Read</div>
<div class="t" style="left:261.9px;width:200px;top:538.86px;font-size:11px;line-height:15px;color:#000;font-weight:normal;letter-spacing:-0.3px;text-align:center;">Write</div>
<div class="t" style="left:54.40px;top:557.56px;font-size:11px;line-height:15px;color:#000;font-weight:normal;letter-spacing:-0.2px;">Sequential</div>
<div class="t" style="left:53.20px;top:577.96px;font-size:11px;line-height:15px;color:#000;font-weight:normal;letter-spacing:-0.2px;">4 KB random single</div>
<div class="t" style="left:53.20px;top:596.86px;font-size:11px;line-height:15px;color:#000;font-weight:normal;letter-spacing:-0.2px;">4 KB random multi</div>
<div class="t" style="right:642px;top:556.93px;font-size:12px;line-height:16px;color:#000;font-weight:bold;letter-spacing:0.3px;text-align:right;">491560 KB/s</div>
<div class="t" style="right:555px;top:556.93px;font-size:12px;line-height:16px;color:#000;font-weight:bold;letter-spacing:0.3px;text-align:right;">265226 KB/s</div>
<div class="t" style="right:642px;top:576.93px;font-size:12px;line-height:16px;color:#000;font-weight:bold;letter-spacing:0.3px;text-align:right;">9275 IOPS</div>
<div class="t" style="right:555px;top:576.93px;font-size:12px;line-height:16px;color:#000;font-weight:bold;letter-spacing:0.3px;text-align:right;">22457 IOPS</div>
<div class="t" style="right:642px;top:595.73px;font-size:12px;line-height:16px;color:#000;font-weight:bold;letter-spacing:0.3px;text-align:right;">41056 IOPS</div>
<div class="t" style="right:555px;top:595.73px;font-size:12px;line-height:16px;color:#000;font-weight:bold;letter-spacing:0.3px;text-align:right;">84034 IOPS</div>
<div class="b" style="left:165px;top:592px;width:35px;height:20px;border:1px solid #abadb3;border-left-color:#dbdfe6;border-bottom-color:#e3e9ef;border-right-color:#e3e9ef;background:#fff"></div>
<div class="b" style="left:183px;top:594px;width:15px;height:8px;border:1px solid #aeb2b8;border-radius:2px;background:linear-gradient(#f4f4f4,#e2e2e2)"></div><div class="b" style="left:183px;top:602px;width:15px;height:8px;border:1px solid #aeb2b8;border-radius:2px;background:linear-gradient(#f4f4f4,#e2e2e2)"></div><svg class="b" style="left:183px;top:594px" width="15" height="16" viewBox="0 0 15 16"><path d="M4.0 6.0 L7.5 2.5 L11.0 6.0 Z" fill="#4a5fb0"/><path d="M4.0 10.0 L7.5 13.5 L11.0 10.0 Z" fill="#4a5fb0"/></svg>
<div class="t" style="left:167.90px;top:596.36px;font-size:11px;line-height:15px;color:#000;font-weight:normal;letter-spacing:-0.2px;">32</div>
<div class="b" style="left:25px;top:621px;width:903px;height:1px;background:#a0a0a0"></div>
<div class="b" style="left:857px;top:129px;width:73px;height:21px;border:1px solid #707070;border-radius:3px;background:linear-gradient(#f2f2f2,#ebebeb 48%,#dddddd 52%,#cfcfcf)"></div><div class="b" style="left:858px;top:130px;width:71px;height:19px;border:1px solid rgba(255,255,255,.75);border-radius:2px"></div>
<div class="t" style="left:793px;width:200px;top:132.66px;font-size:11px;line-height:15px;color:#000;font-weight:normal;letter-spacing:-0.3px;text-align:center;">Start</div>
<div class="t" style="left:855.40px;top:157.56px;font-size:11px;line-height:15px;color:#000;font-weight:normal;letter-spacing:-0.3px;">Drive</div>
<div class="b" style="left:856px;top:176px;width:75px;height:21px;border:1px solid #707070;border-radius:3px;background:linear-gradient(#f2f2f2,#ebebeb 45%,#dddddd 55%,#cfcfcf)"></div><div class="b" style="left:857px;top:177px;width:73px;height:19px;border:1px solid rgba(255,255,255,.7);border-radius:2px"></div>
<svg class="b" style="left:919px;top:185px" width="8" height="5" viewBox="0 0 8 5"><path d="M0 0 H8 L4 4.5 Z" fill="#000"/></svg>
<div class="t" style="left:858.70px;top:179.76px;font-size:11px;line-height:15px;color:#000;font-weight:normal;letter-spacing:-0.2px;">G:</div>
<div class="t" style="left:855.60px;top:202.76px;font-size:11px;line-height:15px;color:#000;font-weight:normal;letter-spacing:-0.3px;">File length</div>
<div class="b" style="left:856px;top:228px;width:56px;height:20px;border:1px solid #abadb3;border-left-color:#dbdfe6;border-bottom-color:#e3e9ef;border-right-color:#e3e9ef;background:#fff"></div>
<div class="b" style="left:895px;top:229px;width:15px;height:9px;border:1px solid #aeb2b8;border-radius:2px;background:linear-gradient(#f4f4f4,#e2e2e2)"></div><div class="b" style="left:895px;top:238px;width:15px;height:9px;border:1px solid #aeb2b8;border-radius:2px;background:linear-gradient(#f4f4f4,#e2e2e2)"></div><svg class="b" style="left:895px;top:229px" width="15" height="18" viewBox="0 0 15 18"><path d="M4.0 6.5 L7.5 3.0 L11.0 6.5 Z" fill="#4a5fb0"/><path d="M4.0 11.5 L7.5 15.0 L11.0 11.5 Z" fill="#4a5fb0"/></svg>
<div class="t" style="left:858.00px;top:229.86px;font-size:11px;line-height:15px;color:#000;font-weight:normal;letter-spacing:-0.2px;">500</div>
<div class="t" style="left:912.40px;top:233.06px;font-size:11px;line-height:15px;color:#000;font-weight:normal;letter-spacing:-0.3px;">MB</div>
<div class="t" style="left:855.60px;top:264.56px;font-size:11px;line-height:15px;color:#000;font-weight:normal;letter-spacing:-0.3px;">Data pattern</div>
<div class="b" style="left:856px;top:284px;width:75px;height:21px;border:1px solid #707070;border-radius:3px;background:linear-gradient(#f2f2f2,#ebebeb 45%,#dddddd 55%,#cfcfcf)"></div><div class="b" style="left:857px;top:285px;width:73px;height:19px;border:1px solid rgba(255,255,255,.7);border-radius:2px"></div>
<svg class="b" style="left:919px;top:292px" width="8" height="5" viewBox="0 0 8 5"><path d="M0 0 H8 L4 4.5 Z" fill="#000"/></svg>
<div class="t" style="left:859.10px;top:286.86px;font-size:11px;line-height:15px;color:#000;font-weight:normal;letter-spacing:-0.3px;">Zero</div>
<div class="t" style="left:857.00px;top:894.06px;font-size:11px;line-height:15px;color:#000;font-weight:normal;letter-spacing:-0.3px;">File length</div>
<div class="b" style="left:856px;top:916px;width:75px;height:21px;border:1px solid #707070;border-radius:3px;background:linear-gradient(#f2f2f2,#ebebeb 45%,#dddddd 55%,#cfcfcf)"></div><div class="b" style="left:857px;top:917px;width:73px;height:19px;border:1px solid rgba(255,255,255,.7);border-radius:2px"></div>
<svg class="b" style="left:919px;top:925px" width="8" height="5" viewBox="0 0 8 5"><path d="M0 0 H8 L4 4.5 Z" fill="#000"/></svg>
<div class="t" style="left:858.50px;top:919.86px;font-size:11px;line-height:15px;color:#000;font-weight:normal;letter-spacing:-0.3px;">64 MB</div>
<div class="t" style="left:857.00px;top:947.96px;font-size:11px;line-height:15px;color:#000;font-weight:normal;letter-spacing:-0.3px;">Delay</div>
<div class="b" style="left:858px;top:968px;width:54px;height:20px;border:1px solid #abadb3;border-left-color:#dbdfe6;border-bottom-color:#e3e9ef;border-right-color:#e3e9ef;background:#fff"></div>
<div class="t" style="left:860.50px;top:971.36px;font-size:11px;line-height:15px;color:#000;font-weight:normal;letter-spacing:-0.2px;">0</div>
<div class="b" style="left:916px;top:967px;width:15px;height:10px;border:1px solid #aeb2b8;border-radius:2px;background:linear-gradient(#f4f4f4,#e2e2e2)"></div><div class="b" style="left:916px;top:977px;width:15px;height:11px;border:1px solid #aeb2b8;border-radius:2px;background:linear-gradient(#f4f4f4,#e2e2e2)"></div><svg class="b" style="left:916px;top:967px" width="15" height="21" viewBox="0 0 15 21"><path d="M4.0 7.0 L7.5 3.5 L11.0 7.0 Z" fill="#4a5fb0"/><path d="M4.0 13.5 L7.5 17.0 L11.0 13.5 Z" fill="#4a5fb0"/></svg>
</body></html>
